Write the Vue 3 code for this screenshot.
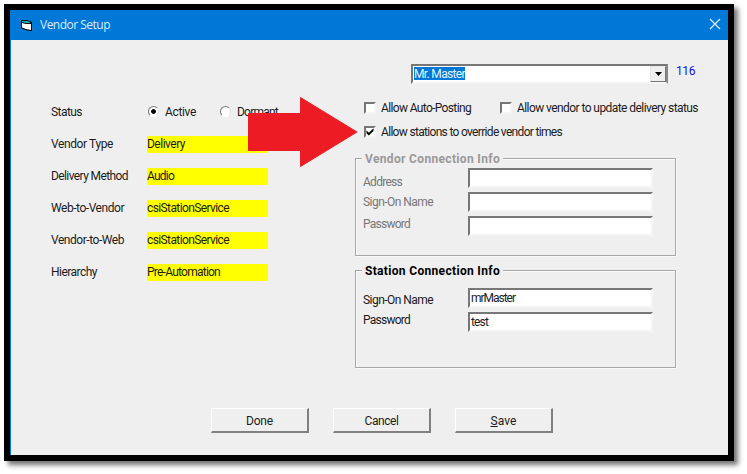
<script setup>
const settings = [
  { label: 'Vendor Type', lw: 62, value: 'Delivery', vw: 38 },
  { label: 'Delivery Method', lw: 77, value: 'Audio', vw: 27 },
  { label: 'Web-to-Vendor', lw: 73, value: 'csiStationService', vw: 82 },
  { label: 'Vendor-to-Web', lw: 73, value: 'csiStationService', vw: 82 },
  { label: 'Hierarchy', lw: 46, value: 'Pre-Automation', vw: 73 },
]

const groups = [
  {
    title: 'Vendor Connection Info',
    kind: 'vendor',
    labels: [['Address', 39], ['Sign-On Name', 70], ['Password', 47]],
    inputs: [['', 0], ['', 0], ['', 0]],
  },
  {
    title: 'Station Connection Info',
    kind: 'station',
    labels: [['Sign-On Name', 70], ['Password', 47]],
    inputs: [['mrMaster', 44], ['test', 17]],
  },
]

// Tracks a caption so that it fills the given width in pixels.
const vFit = {
  mounted(el, { value }) {
    const n = el.textContent.length
    if (!value || !n) return
    const natural = el.getBoundingClientRect().width
    el.style.letterSpacing = `${(value - natural) / n}px`
  },
}
</script>

<template>
  <div class="page">
    <div class="window">
      <header class="titlebar">
        <svg class="app-icon" width="14" height="13" viewBox="0 0 14 13">
          <path d="M0 1H6L11 3V12H9L4 11L0 9Z" fill="#0a0a0a" />
          <path d="M1 2H6L9 3V4H5L1 3Z" fill="#16b5b5" />
          <path d="M1 4L5 5H10V11L5 10L1 8.500Z" fill="#fff" />
          <path d="M11 8L13 10L11 11Z" fill="#4d7188" />
        </svg>
        <span v-fit="70" class="title">Vendor Setup</span>
        <svg class="close" width="12" height="12" viewBox="0 0 12 12">
          <path d="M1 1L11 11M11 1L1 11" stroke="#d9ecfb" stroke-width="1.3" />
        </svg>
      </header>

      <main class="client">
        <div class="columns">
          <section class="left">
            <div class="row">
              <span class="label"><span v-fit="31" class="t">Status</span></span>
              <span class="radio on"></span>
              <span class="active"><span v-fit="31" class="t">Active</span></span>
              <span class="radio"></span>
              <span v-fit="41" class="t">Dormant</span>
            </div>
            <div v-for="s in settings" :key="s.label" class="row">
              <span class="label"><span v-fit="s.lw" class="t">{{ s.label }}</span></span>
              <span class="value"><span v-fit="s.vw" class="t">{{ s.value }}</span></span>
            </div>
          </section>

          <section class="right">
            <div class="picker">
              <div class="combo sunken">
                <span v-fit="51" class="t selected">Mr. Master</span>
                <span class="drop">
                  <svg width="7" height="4" viewBox="0 0 7 4"><path d="M0 0H7L3.500 4Z" fill="#000" /></svg>
                </span>
              </div>
              <span v-fit="19" class="t code">116</span>
            </div>

            <div class="checks">
              <div class="check first">
                <span class="box sunken"></span>
                <span v-fit="90" class="t">Allow Auto-Posting</span>
              </div>
              <div class="check">
                <span class="box sunken"></span>
                <span v-fit="181" class="t">Allow vendor to update delivery status</span>
              </div>
            </div>
            <div class="checks">
              <div class="check">
                <span class="box sunken">
                  <svg width="8" height="8" viewBox="0 0 8 8"><path d="M0.500 2.500V5.300L2.800 7.500L7.500 3V0.300L2.800 4.800Z" fill="#000" /></svg>
                </span>
                <span v-fit="181" class="t">Allow stations to override vendor times</span>
              </div>
            </div>

            <div v-for="g in groups" :key="g.title" class="group" :class="g.kind">
              <div class="legend"><span v-fit="135" class="t bold">{{ g.title }}</span></div>
              <div class="fields">
                <div class="names">
                  <div v-for="l in g.labels" :key="l[0]" class="name"><span v-fit="l[1]" class="t">{{ l[0] }}</span></div>
                </div>
                <div class="inputs">
                  <div v-for="(i, k) in g.inputs" :key="k" class="input sunken"><span v-fit="i[1]" class="t">{{ i[0] }}</span></div>
                </div>
              </div>
            </div>
          </section>
        </div>

        <footer class="actions">
          <div class="button"><span v-fit="27" class="t">Done</span></div>
          <div class="button"><span v-fit="34" class="t">Cancel</span></div>
          <div class="button"><span v-fit="26" class="t"><u>S</u>ave</span></div>
        </footer>
      </main>
    </div>

    <svg class="arrow" width="112" height="72" viewBox="0 0 112 72">
      <path d="M1.500 17.500H53.500V1.500L110 36L53.500 70.500V54.500H1.500Z" fill="#ed1c24" stroke="#ed1c24" stroke-width="1" stroke-linejoin="round" />
    </svg>
  </div>
</template>

<style>
body { margin: 0; background: #fff; }
</style>

<style scoped>
* { box-sizing: border-box; flex-shrink: 0; }
.page {
  position: relative;
  width: 747px;
  height: 474px;
  padding: 4px;
  overflow: hidden;
  background: #fff;
  font-family: Roboto, "Liberation Sans", sans-serif;
  font-size: 12px;
  line-height: 14px;
  color: #1c1c1c;
}
.window {
  width: 730px;
  height: 457px;
  border: 6px solid #000;
  background: #efefef;
  box-shadow: 4px 4px 5px rgba(0, 0, 0, 0.55);
}
.t { display: inline-block; white-space: pre; }
.bold { font-weight: 700; }
.titlebar {
  display: flex;
  align-items: center;
  height: 30px;
  padding: 0 7px 0 11px;
  background: #0078d7;
}
.title {
  margin-left: 5px;
  font-family: "Open Sans", sans-serif;
  font-size: 12px;
  line-height: 16px;
  color: #d9ecfb;
  white-space: pre;
}
.close { margin: -2px 0 0 auto; }
.client { height: 415px; border-left: 1px solid #0078d7; }
.columns { display: flex; height: 368px; }
.left { width: 344px; padding: 64px 0 0 40px; }
.row { display: flex; height: 32px; }
.label { width: 96px; }
.value { width: 121px; height: 17px; background: #ff0; }
.radio {
  width: 11px;
  height: 11px;
  margin: 2px 6px 0 1px;
  border: 1.500px solid;
  border-color: #777 #e2e2e2 #fff #777;
  border-radius: 50%;
  background: #fff;
}
.radio.on { background: radial-gradient(circle, #000 2px, #fff 2.700px); }
.active { width: 54px; }
.row .t { line-height: 16px; }
.right { width: 370px; padding-top: 24px; }
.sunken {
  border: 2px solid;
  border-color: #777 #f5f5f5 #f5f5f5 #777;
  background: #fff;
}
.picker { display: flex; margin-left: 56px; height: 37px; }
.combo {
  display: flex;
  justify-content: space-between;
  width: 257px;
  height: 20px;
  padding-left: 1px;
  border-right-color: #888;
}
.selected { height: 13px; margin-top: 1px; line-height: 14px; background: #0078d7; color: #e5f3ff; }
.drop {
  display: flex;
  align-items: center;
  justify-content: center;
  width: 16px;
  height: 16px;
  border: 1px solid;
  border-color: #e8e8e8 #777 #777 #e8e8e8;
  background: #efefef;
}
.code { margin-left: 8px; color: #1010f0; }
.checks { display: flex; height: 24px; padding-left: 9px; }
.check { display: flex; }
.first { width: 136px; }
.box { display: flex; width: 12px; height: 12px; margin: 1px 5px 0 0; }
.group { width: 321px; height: 98px; margin-top: 9px; border: 1px solid #a8a8a8; box-shadow: inset 1px 1px #f9f9f9, 1px 1px #f9f9f9; }
.station { margin-top: 14px; }
.legend { width: 141px; height: 14px; margin: -7px 0 0 6px; padding-left: 3px; background: #efefef; }
.fields { display: flex; padding: 2px 0 0 7px; }
.station .fields { padding-top: 10px; }
.names { width: 105px; }
.name { height: 20px; }
.vendor .names { padding-top: 7px; color: #777; }
.vendor .name:nth-child(2) { height: 22px; }
.vendor .legend { color: #999; }
.station .names { padding-top: 5px; }
.station .legend { color: #000; }
.inputs { display: flex; flex-direction: column; gap: 4px; }
.input { width: 185px; height: 20px; padding: 1px; }
.actions { display: flex; gap: 24px; padding-left: 200px; }
.button {
  width: 98px;
  height: 25px;
  padding-top: 5px;
  border: 2px solid;
  border-width: 1px 2px 2px 1px;
  border-color: #fff #808080 #808080 #fff;
  text-align: center;
}
.arrow { position: absolute; left: 247px; top: 96px; }
</style>
